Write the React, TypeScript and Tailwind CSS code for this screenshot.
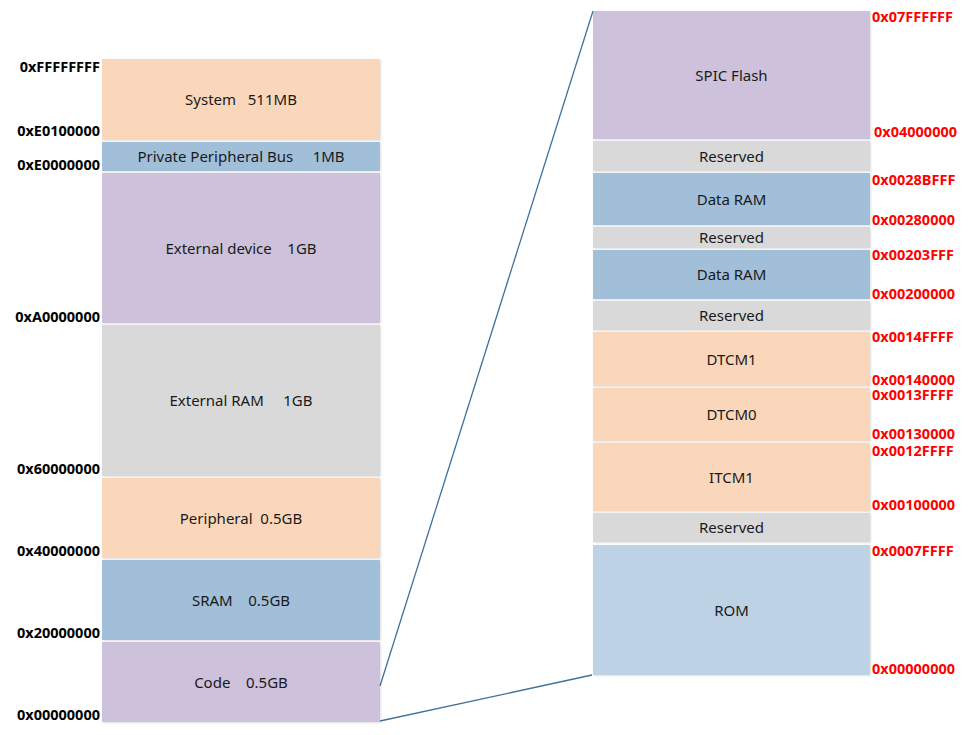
import React from "react";

const O = "bg-[#fad7bb]", B = "bg-[#a1bfd9]", P = "bg-[#cdc1db]", G = "bg-[#d9d9d9]", L = "bg-[#bed2e6]";

type Blk = { h: number; c: string; t: string; mt: number };
const left: Blk[] = [
  { mt: 0, h: 81, c: O, t: "System\u00a0\u00a0 511MB" },
  { mt: 2, h: 29, c: B, t: "Private Peripheral Bus\u00a0\u00a0\u00a0\u00a0 1MB" },
  { mt: 2, h: 150, c: P, t: "External device\u00a0\u00a0\u00a0 1GB" },
  { mt: 2, h: 151, c: G, t: "External RAM\u00a0\u00a0\u00a0\u00a0 1GB" },
  { mt: 2, h: 80, c: O, t: "Peripheral\u00a0 0.5GB" },
  { mt: 2, h: 80, c: B, t: "SRAM\u00a0\u00a0\u00a0 0.5GB" },
  { mt: 2, h: 80, c: P, t: "Code\u00a0\u00a0\u00a0 0.5GB" },
];
const right: Blk[] = [
  { mt: 0, h: 128, c: P, t: "SPIC Flash" },
  { mt: 2, h: 30, c: G, t: "Reserved" },
  { mt: 2, h: 52, c: B, t: "Data RAM" },
  { mt: 2, h: 21, c: G, t: "Reserved" },
  { mt: 2, h: 49, c: B, t: "Data RAM" },
  { mt: 2, h: 29, c: G, t: "Reserved" },
  { mt: 2, h: 54, c: O, t: "DTCM1" },
  { mt: 2, h: 53, c: O, t: "DTCM0" },
  { mt: 2, h: 68, c: O, t: "ITCM1" },
  { mt: 2, h: 29, c: G, t: "Reserved" },
  { mt: 3, h: 130, c: L, t: "ROM" },
];
const leftLabels: [string, number][] = [
  ["0xFFFFFFFF", 67], ["0xE0100000", 131], ["0xE0000000", 165], ["0xA0000000", 317],
  ["0x60000000", 469], ["0x40000000", 551], ["0x20000000", 633], ["0x00000000", 715],
];
const rightLabels: [string, number, number][] = [
  ["0x07FFFFFF", 17, 872], ["0x04000000", 132, 874], ["0x0028BFFF", 180, 872], ["0x00280000", 220, 872],
  ["0x00203FFF", 255, 872], ["0x00200000", 294, 872], ["0x0014FFFF", 337, 872], ["0x00140000", 380, 872],
  ["0x0013FFFF", 395, 872], ["0x00130000", 434, 872], ["0x0012FFFF", 451, 872], ["0x00100000", 505, 872],
  ["0x0007FFFF", 551, 872], ["0x00000000", 669, 872],
];

function Col({ blocks, cls }: { blocks: Blk[]; cls: string }) {
  return (
    <div className={`flex flex-col ${cls}`}>
      {blocks.map((b, i) => (
        <div key={i} className={`${b.c} flex items-center justify-center text-[15px] text-[#1a1a1a] shadow-[1px_1px_2px_rgba(0,0,0,0.12)]`} style={{ height: b.h, marginTop: b.mt }}>
          {b.t}
        </div>
      ))}
    </div>
  );
}

export default function App() {
  return (
    <div className="relative w-[971px] h-[735px] bg-white overflow-hidden font-['Lato','Open_Sans',sans-serif]">
      <div className="flex items-start">
        <Col blocks={left} cls="ml-[102px] mt-[59px] w-[278px]" />
        <Col blocks={right} cls="ml-[213px] mt-[11px] w-[277px]" />
      </div>
      <svg className="absolute inset-0" width="971" height="735">
        <line x1="380" y1="686" x2="593" y2="11" stroke="#41719c" strokeWidth="1.3" />
        <line x1="380" y1="721" x2="592" y2="675" stroke="#41719c" strokeWidth="1.3" />
      </svg>
      {leftLabels.map(([t, y]) => (
        <div key={t + y} className="absolute right-[871px] text-[14.5px] font-bold text-black leading-none" style={{ top: y - 8 }}>{t}</div>
      ))}
      {rightLabels.map(([t, y, x]) => (
        <div key={t + y} className="absolute text-[14.5px] font-bold text-[#ff0000] leading-none" style={{ top: y - 8, left: x }}>{t}</div>
      ))}
    </div>
  );
}
